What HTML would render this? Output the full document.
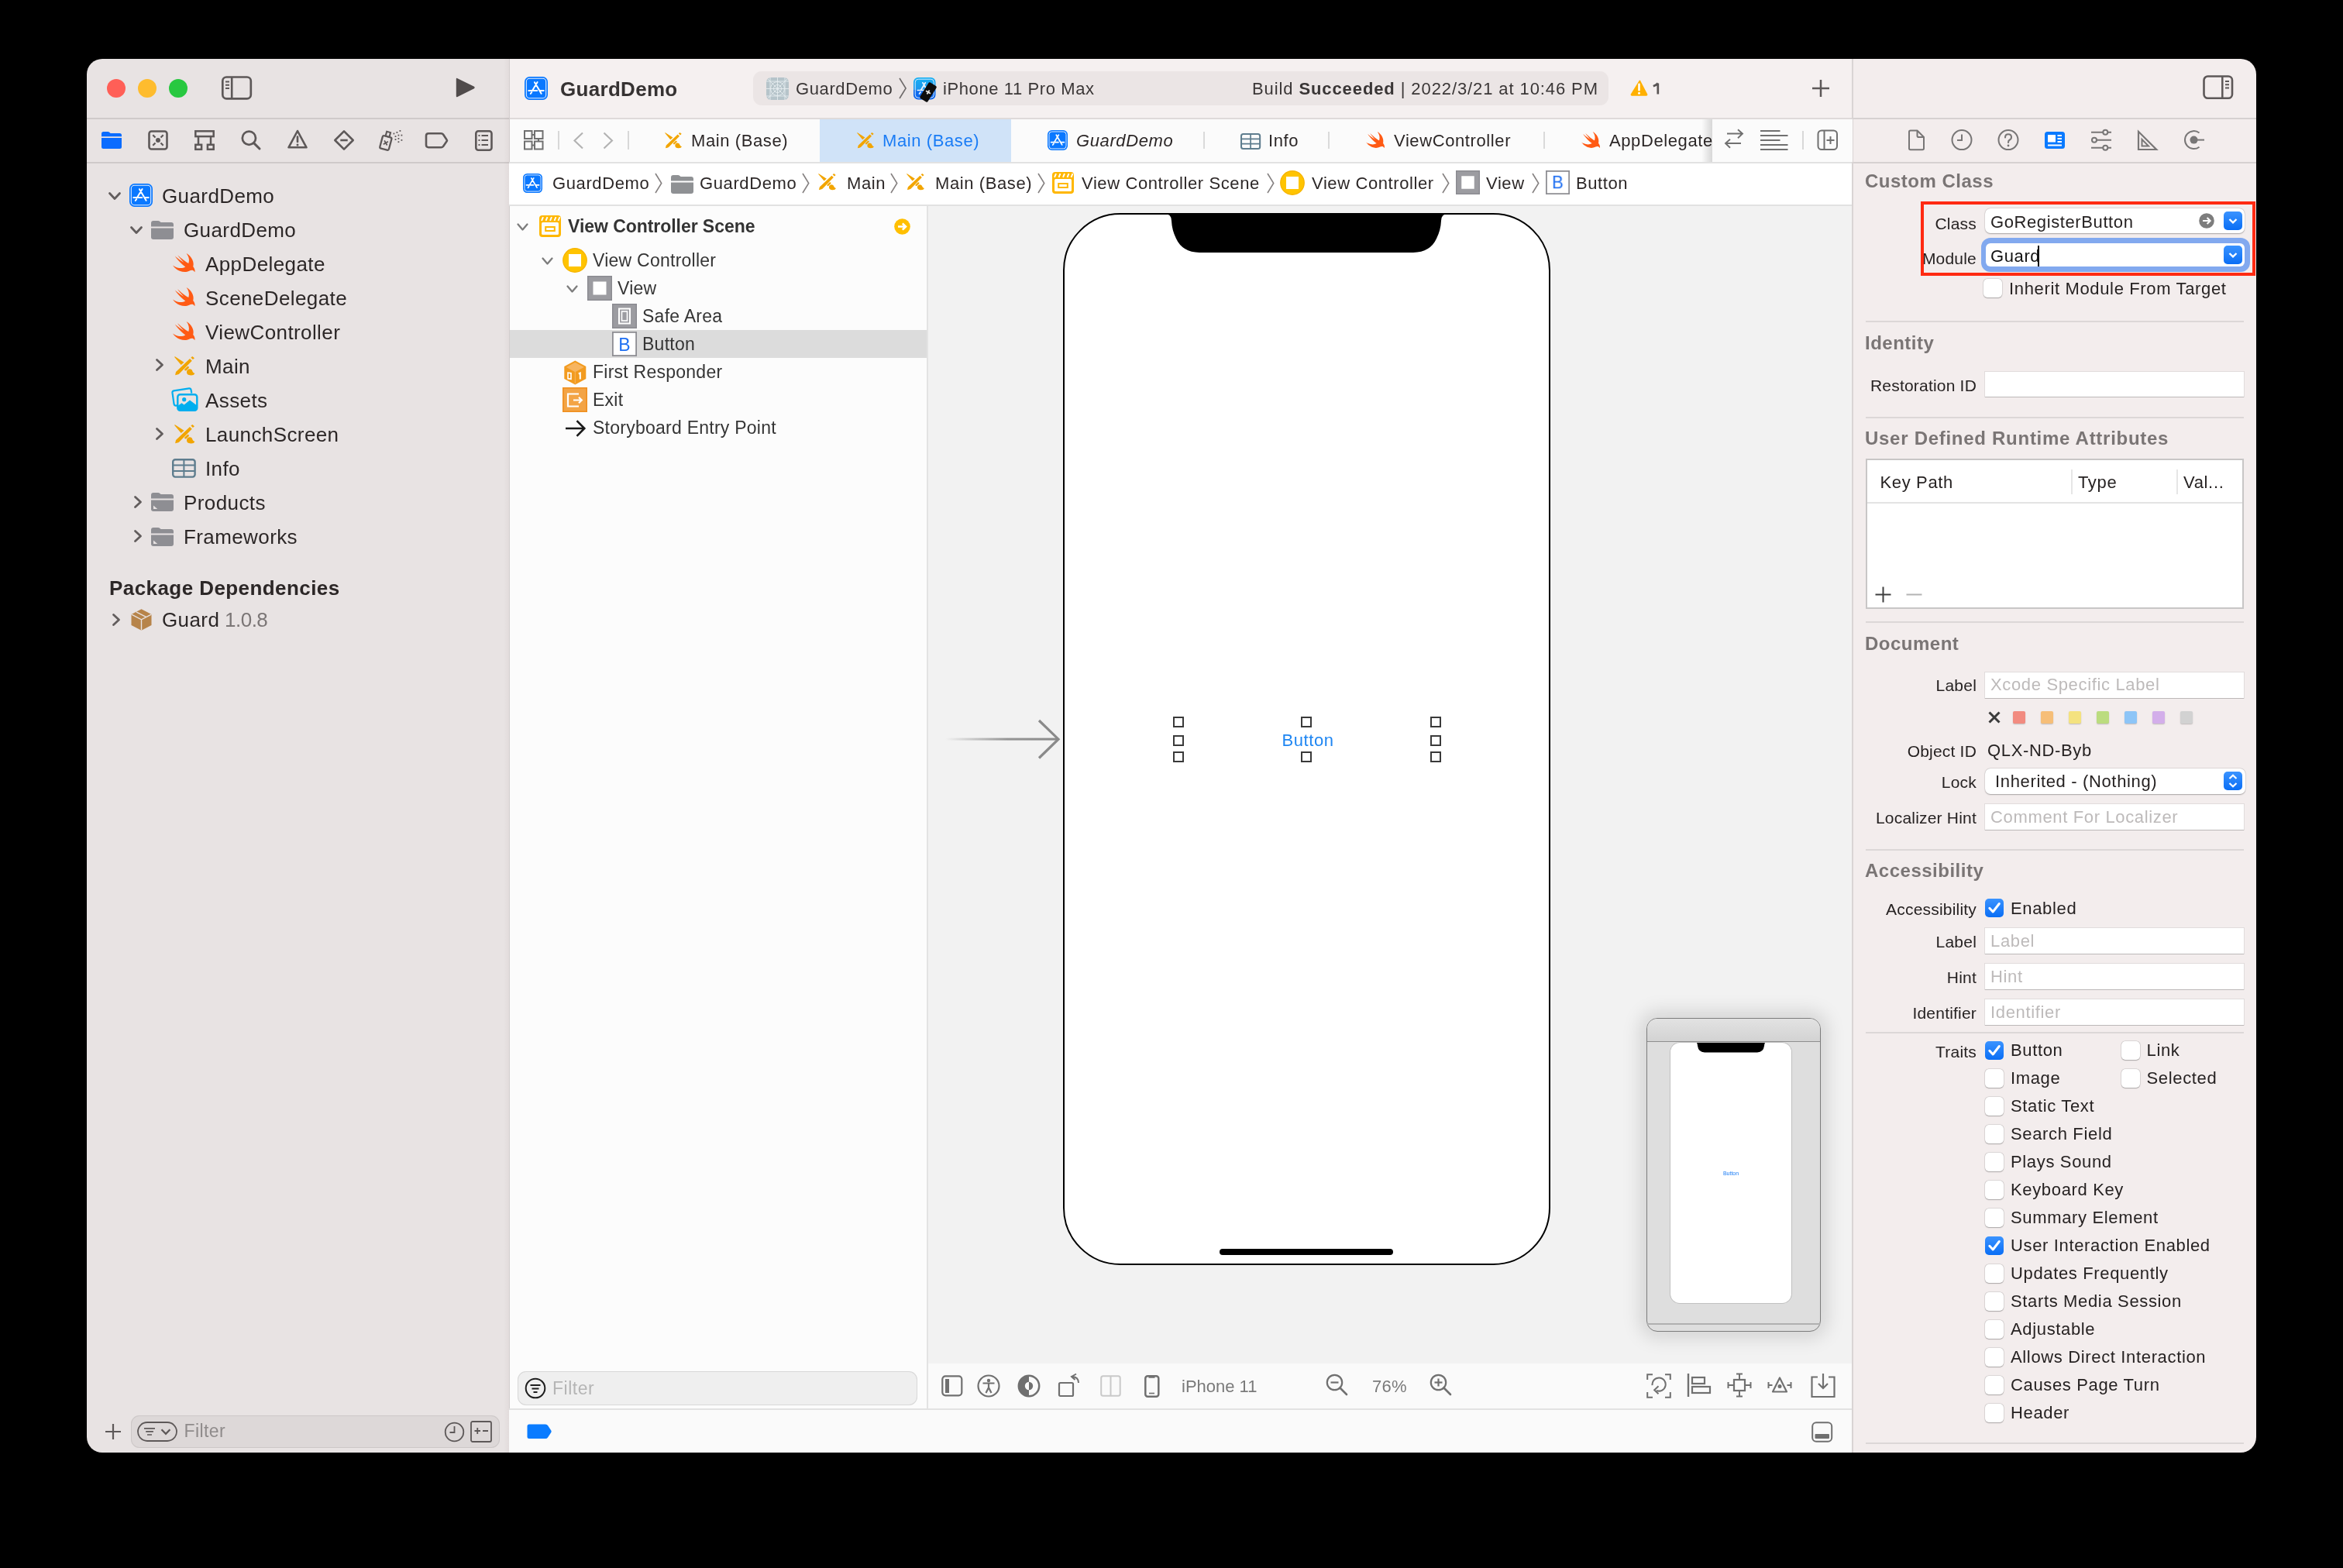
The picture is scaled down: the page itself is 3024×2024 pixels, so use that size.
<!DOCTYPE html><html><head><meta charset="utf-8"><title>Xcode</title><style>
html,body{margin:0;padding:0;}
body{width:3024px;height:2024px;background:#000;position:relative;overflow:hidden;font-family:"Liberation Sans", sans-serif;}
.a{position:absolute;}
.t{position:absolute;white-space:nowrap;line-height:1;}
svg{overflow:visible;}
</style></head><body><div class="a" style="left:0;top:0;width:3024px;height:2024px;clip-path:inset(76px 112px 149px 112px round 20px);will-change:transform;"><div class="a" style="left:112px;top:76px;width:545px;height:1799px;background:#E8E3E3;"></div><div class="a" style="left:657px;top:76px;width:1734px;height:76px;background:#F5F0F0;"></div><div class="a" style="left:2391px;top:76px;width:521px;height:1799px;background:#F3EDED;"></div><div class="a" style="left:112px;top:152px;width:545px;height:2px;background:#CFCACA;"></div><div class="a" style="left:112px;top:209px;width:545px;height:2px;background:#CFCACA;"></div><div class="a" style="left:650px;top:76px;width:7px;height:1799px;background:linear-gradient(90deg,rgba(0,0,0,0),rgba(80,40,40,0.04));"></div><div class="a" style="left:657px;top:76px;width:1px;height:1799px;background:#D3CECE;"></div><div class="a" style="left:658px;top:152px;width:1733px;height:2px;background:#DEDADA;"></div><div class="a" style="left:658px;top:154px;width:1733px;height:55px;background:#FBFBFB;"></div><div class="a" style="left:657px;top:209px;width:1734px;height:2px;background:#E2E2E2;"></div><div class="a" style="left:657px;top:211px;width:1734px;height:53px;background:#FFFFFF;"></div><div class="a" style="left:657px;top:264px;width:1734px;height:2px;background:#E2E2E2;"></div><div class="a" style="left:658px;top:266px;width:538px;height:1553px;background:#FCFCFC;"></div><div class="a" style="left:1196px;top:266px;width:2px;height:1553px;background:#E3E3E3;"></div><div class="a" style="left:1198px;top:266px;width:1193px;height:1494px;background:#F2F2F2;"></div><div class="a" style="left:1198px;top:1760px;width:1193px;height:59px;background:#FAFAFA;"></div><div class="a" style="left:657px;top:1818px;width:1734px;height:2px;background:#E2E2E2;"></div><div class="a" style="left:657px;top:1820px;width:1734px;height:56px;background:#FAFAFA;"></div><div class="a" style="left:2390px;top:76px;width:2px;height:1799px;background:#D9D4D4;"></div><div class="a" style="left:2392px;top:152px;width:520px;height:2px;background:#D6D1D1;"></div><div class="a" style="left:2392px;top:209px;width:520px;height:2px;background:#D6D1D1;"></div><div class="a" style="left:138px;top:102px;width:24px;height:24px;border-radius:50%;background:#FF5F57;"></div><div class="a" style="left:178px;top:102px;width:24px;height:24px;border-radius:50%;background:#FEBC2E;"></div><div class="a" style="left:218px;top:102px;width:24px;height:24px;border-radius:50%;background:#28C840;"></div><svg class="a" style="left:284px;top:96px;" width="42" height="34" viewBox="0 0 42 34"><rect x="3.3" y="3.5" width="36.5" height="27.8" rx="5" fill="none" stroke="#5D5858" stroke-width="2.7"/><line x1="15.2" y1="3.5" x2="15.2" y2="31.3" stroke="#5D5858" stroke-width="2.6"/><path d="M7 9.5h5M7 13.7h5M7 18h5" stroke="#5D5858" stroke-width="2"/></svg><svg class="a" style="left:586px;top:97px;" width="30" height="32" viewBox="0 0 30 32"><path d="M4.5 4.2 Q2.8 3.2 2.8 5.2 V27 Q2.8 29 4.5 28 L26 17.3 Q27.6 16 26 14.8 Z" fill="#504B4B"/></svg><svg class="a" style="left:130px;top:168px;" width="28" height="26" viewBox="0 0 28 26"><path d="M1 4.5 Q1 2 3.5 2 H9 Q10.5 2 11.5 3 L12.5 4 H24.5 Q27 4 27 6.5 V8.2 H1 Z" fill="#0A6CFF"/><path d="M1 10 H27 V21.5 Q27 24 24.5 24 H3.5 Q1 24 1 21.5 Z" fill="#0A6CFF"/></svg><svg class="a" style="left:190px;top:167px;" width="28" height="28" viewBox="0 0 28 28"><rect x="2.5" y="2.5" width="23" height="23" rx="3" fill="none" stroke="#5D5858" stroke-width="2.6"/><circle cx="14" cy="14" r="3" fill="#5D5858"/><path d="M7.3 7.3 L10.5 10.5 M20.7 7.3 L17.5 10.5 M7.3 20.7 L10.5 17.5 M20.7 20.7 L17.5 17.5" stroke="#5D5858" stroke-width="2.2"/></svg><svg class="a" style="left:250px;top:167px;" width="28" height="28" viewBox="0 0 28 28"><rect x="2.3" y="2.3" width="23.4" height="6.8" fill="none" stroke="#5D5858" stroke-width="2.5"/><path d="M6 9 V19.5 M22 9 V19.5" stroke="#5D5858" stroke-width="2.5"/><rect x="2.3" y="19.8" width="7.8" height="6" fill="none" stroke="#5D5858" stroke-width="2.5"/><rect x="17.9" y="19.8" width="7.8" height="6" fill="none" stroke="#5D5858" stroke-width="2.5"/></svg><svg class="a" style="left:309px;top:166px;" width="30" height="30" viewBox="0 0 30 30"><circle cx="12.4" cy="12.2" r="8.6" fill="none" stroke="#5D5858" stroke-width="2.7"/><path d="M18.6 18.6 L26 26" stroke="#5D5858" stroke-width="3" stroke-linecap="round"/></svg><svg class="a" style="left:370px;top:166px;" width="28" height="28" viewBox="0 0 28 28"><path d="M14 3 L25.5 24.3 H2.5 Z" fill="none" stroke="#5D5858" stroke-width="2.6" stroke-linejoin="round"/><path d="M14 10.5 V17" stroke="#5D5858" stroke-width="2.6" stroke-linecap="round"/><circle cx="14" cy="21" r="1.5" fill="#5D5858"/></svg><svg class="a" style="left:430px;top:167px;" width="28" height="28" viewBox="0 0 28 28"><path d="M14 2.3 L25.7 14 L14 25.7 L2.3 14 Z" fill="none" stroke="#5D5858" stroke-width="2.6" stroke-linejoin="round"/><path d="M9.3 14 H18.7" stroke="#5D5858" stroke-width="2.6"/></svg><svg class="a" style="left:488px;top:166px;" width="34" height="30" viewBox="0 0 34 30"><g transform="rotate(15 10 18)"><rect x="4" y="10" width="12" height="17" rx="2" fill="none" stroke="#5D5858" stroke-width="2.3"/><rect x="7.5" y="4" width="5" height="6" fill="none" stroke="#5D5858" stroke-width="2.1"/><path d="M7.5 16 L12.5 21 M12.5 16 L7.5 21" stroke="#5D5858" stroke-width="1.8"/></g><rect x="27.5" y="2" width="1.8" height="1.8" fill="#5D5858"/><rect x="23.5" y="4" width="1.8" height="1.8" fill="#5D5858"/><rect x="19.5" y="5.6" width="1.8" height="1.8" fill="#5D5858"/><rect x="21.6" y="9.2" width="1.8" height="1.8" fill="#5D5858"/><rect x="25.5" y="7.7" width="1.8" height="1.8" fill="#5D5858"/><rect x="29.5" y="7.7" width="1.8" height="1.8" fill="#5D5858"/><rect x="25.5" y="12" width="1.8" height="1.8" fill="#5D5858"/><rect x="21.6" y="13.2" width="1.8" height="1.8" fill="#5D5858"/><rect x="29.5" y="14" width="1.8" height="1.8" fill="#5D5858"/><rect x="25.5" y="16.3" width="1.8" height="1.8" fill="#5D5858"/></svg><svg class="a" style="left:547px;top:170px;" width="33" height="22" viewBox="0 0 33 22"><path d="M6 2.2 H22.5 Q24 2.2 25 3.6 L29.6 10.5 Q30.4 11.4 29.6 12.3 L25 19 Q24 20.2 22.5 20.2 H6 Q3 20.2 3 17.2 V5.2 Q3 2.2 6 2.2 Z" fill="none" stroke="#5D5858" stroke-width="2.6"/></svg><svg class="a" style="left:611px;top:166px;" width="26" height="30" viewBox="0 0 26 30"><rect x="3.3" y="3.3" width="20.2" height="24.4" rx="3" fill="none" stroke="#5D5858" stroke-width="2.6"/><path d="M6.5 9 H8.4 M6.5 15 H8.4 M6.5 21 H8.4" stroke="#5D5858" stroke-width="2"/><path d="M10.5 9 H19 M10.5 15 H19 M10.5 21 H19" stroke="#5D5858" stroke-width="2"/></svg><svg class="a" style="left:140px;top:248px;" width="16" height="10" viewBox="0 0 16 10"><path d="M1.5 1.5 L8.0 8.5 L14.5 1.5" fill="none" stroke="#625D5D" stroke-width="2.8" stroke-linecap="round" stroke-linejoin="round"/></svg><svg class="a" style="left:166.5px;top:237px;" width="30" height="30" viewBox="0 0 30 30"><g transform="scale(1.0000)"><rect x="0" y="0" width="30" height="30" rx="6.5" fill="#0A78FF"/><rect x="2.3" y="2.3" width="25.4" height="25.4" rx="4.2" fill="none" stroke="#E3EEFF" stroke-width="1.1"/><path d="M13 7.2 L21.6 21.8 M16.6 7.1 L10.5 17.2 M7.8 21.9 L9.2 20.1 M5.3 17.9 H16.2 M19.6 17.9 H24.7" stroke="#FFF" stroke-width="2" stroke-linecap="round" fill="none"/></g></svg><svg class="a" style="left:168px;top:292px;" width="16" height="10" viewBox="0 0 16 10"><path d="M1.5 1.5 L8.0 8.5 L14.5 1.5" fill="none" stroke="#625D5D" stroke-width="2.8" stroke-linecap="round" stroke-linejoin="round"/></svg><svg class="a" style="left:195px;top:284.5px;" width="29" height="24" viewBox="0 0 29 24"><path d="M0 3 Q0 0 3 0 H9 Q10.4 0 11.4 1 L12.6 2 H26 Q29 2 29 5 V7.6 H0 Z" fill="#8E8E93"/><path d="M0 9.4 H29 V21 Q29 24 26 24 H3 Q0 24 0 21 Z" fill="#8E8E93"/></svg><svg class="a" style="left:223.4px;top:326.9px;" width="28.6" height="24.2" viewBox="0 0 28.6 24.2"><g transform="scale(1.5786 1.4926) translate(-2.411 -3.409)"><path d="M13.543 3.41c4.114 2.47 6.545 7.162 5.549 11.131-.024.093-.05.181-.076.272l.002.001c2.062 2.538 1.5 5.258 1.236 4.745-1.072-2.086-3.066-1.568-4.088-1.043a6.803 6.803 0 0 1-.281.158l-.02.012-.002.002c-2.115 1.123-4.957 1.205-7.812-.022a12.568 12.568 0 0 1-5.64-4.838c.649.48 1.35.902 2.097 1.252 3.019 1.414 6.051 1.311 8.197-.002C9.651 12.73 7.101 9.67 5.146 7.191a10.628 10.628 0 0 1-1.005-1.384c2.34 2.142 6.038 4.83 7.365 5.576C8.69 8.408 6.208 4.743 6.324 4.86c4.436 4.47 8.528 6.996 8.528 6.996.154.085.27.154.36.213.085-.215.16-.437.224-.668.708-2.588-.09-5.548-1.893-7.992z" fill="#FF5A14"/></g></svg><svg class="a" style="left:223.4px;top:370.9px;" width="28.6" height="24.2" viewBox="0 0 28.6 24.2"><g transform="scale(1.5786 1.4926) translate(-2.411 -3.409)"><path d="M13.543 3.41c4.114 2.47 6.545 7.162 5.549 11.131-.024.093-.05.181-.076.272l.002.001c2.062 2.538 1.5 5.258 1.236 4.745-1.072-2.086-3.066-1.568-4.088-1.043a6.803 6.803 0 0 1-.281.158l-.02.012-.002.002c-2.115 1.123-4.957 1.205-7.812-.022a12.568 12.568 0 0 1-5.64-4.838c.649.48 1.35.902 2.097 1.252 3.019 1.414 6.051 1.311 8.197-.002C9.651 12.73 7.101 9.67 5.146 7.191a10.628 10.628 0 0 1-1.005-1.384c2.34 2.142 6.038 4.83 7.365 5.576C8.69 8.408 6.208 4.743 6.324 4.86c4.436 4.47 8.528 6.996 8.528 6.996.154.085.27.154.36.213.085-.215.16-.437.224-.668.708-2.588-.09-5.548-1.893-7.992z" fill="#FF5A14"/></g></svg><svg class="a" style="left:223.4px;top:414.9px;" width="28.6" height="24.2" viewBox="0 0 28.6 24.2"><g transform="scale(1.5786 1.4926) translate(-2.411 -3.409)"><path d="M13.543 3.41c4.114 2.47 6.545 7.162 5.549 11.131-.024.093-.05.181-.076.272l.002.001c2.062 2.538 1.5 5.258 1.236 4.745-1.072-2.086-3.066-1.568-4.088-1.043a6.803 6.803 0 0 1-.281.158l-.02.012-.002.002c-2.115 1.123-4.957 1.205-7.812-.022a12.568 12.568 0 0 1-5.64-4.838c.649.48 1.35.902 2.097 1.252 3.019 1.414 6.051 1.311 8.197-.002C9.651 12.73 7.101 9.67 5.146 7.191a10.628 10.628 0 0 1-1.005-1.384c2.34 2.142 6.038 4.83 7.365 5.576C8.69 8.408 6.208 4.743 6.324 4.86c4.436 4.47 8.528 6.996 8.528 6.996.154.085.27.154.36.213.085-.215.16-.437.224-.668.708-2.588-.09-5.548-1.893-7.992z" fill="#FF5A14"/></g></svg><svg class="a" style="left:201px;top:463px;" width="10" height="16" viewBox="0 0 10 16"><path d="M1.5 1.5 L8.5 8.0 L1.5 14.5" fill="none" stroke="#625D5D" stroke-width="2.8" stroke-linecap="round" stroke-linejoin="round"/></svg><svg class="a" style="left:224.5px;top:459.7px;" width="26.4" height="24.5" viewBox="0 0 26.4 24.5"><path d="M0.9 0.2 Q0 0 0.25 0.9 L8.7 11 L12.5 7.8 Z" fill="#F2A500"/><path d="M20 3.1 L22.8 5.8 L6.3 22.6 Q5.8 23.1 5 23.3 L1.1 24.3 L1.9 20.6 Q2.1 19.9 2.6 19.4 Z" fill="#F2A500"/><path d="M21.4 1.4 L23.3 0.1 L26 2.2 L23.9 4.1 Z" fill="#F2A500"/><path d="M14.4 17.2 L17.6 14.2" stroke="#F2A500" stroke-width="2.6" stroke-linecap="round"/><path d="M16 20.8 Q15.8 16.8 19.6 16.3 Q22.7 16.2 23.5 19.4 Q24.1 21.2 26.4 21.9 Q25.4 24.4 21.5 24.4 Q16.2 24.5 16 20.8 Z" fill="#F2A500"/></svg><svg class="a" style="left:221px;top:501px;" width="35" height="30" viewBox="0 0 35 30"><g><path d="M1.5 6.2 Q1 3.8 3.4 3.3 L23 0.4 Q25.2 0.1 25.6 2.4 L26.3 6.5" fill="none" stroke="#00AEEF" stroke-width="2.2"/><path d="M1.5 6.2 L3.6 20.8 Q4 22.8 6 22.6 L8 22.3" fill="none" stroke="#00AEEF" stroke-width="2.2"/><rect x="8.3" y="8.2" width="25" height="20.6" rx="3.2" fill="none" stroke="#00AEEF" stroke-width="2.4"/><circle cx="16.7" cy="14.7" r="2.6" fill="#00AEEF"/><path d="M8.3 23 L13.5 19.3 L16.6 21.6 L24 15.4 L33.3 22.5 V26 Q33.3 28.8 30.5 28.8 H11 Q8.3 28.8 8.3 26 Z" fill="#00AEEF"/></g></svg><svg class="a" style="left:201px;top:552px;" width="10" height="16" viewBox="0 0 10 16"><path d="M1.5 1.5 L8.5 8.0 L1.5 14.5" fill="none" stroke="#625D5D" stroke-width="2.8" stroke-linecap="round" stroke-linejoin="round"/></svg><svg class="a" style="left:224.5px;top:547.7px;" width="26.4" height="24.5" viewBox="0 0 26.4 24.5"><path d="M0.9 0.2 Q0 0 0.25 0.9 L8.7 11 L12.5 7.8 Z" fill="#F2A500"/><path d="M20 3.1 L22.8 5.8 L6.3 22.6 Q5.8 23.1 5 23.3 L1.1 24.3 L1.9 20.6 Q2.1 19.9 2.6 19.4 Z" fill="#F2A500"/><path d="M21.4 1.4 L23.3 0.1 L26 2.2 L23.9 4.1 Z" fill="#F2A500"/><path d="M14.4 17.2 L17.6 14.2" stroke="#F2A500" stroke-width="2.6" stroke-linecap="round"/><path d="M16 20.8 Q15.8 16.8 19.6 16.3 Q22.7 16.2 23.5 19.4 Q24.1 21.2 26.4 21.9 Q25.4 24.4 21.5 24.4 Q16.2 24.5 16 20.8 Z" fill="#F2A500"/></svg><svg class="a" style="left:222px;top:591.5px;" width="31.0" height="25.0" viewBox="0 0 31.0 25.0"><g transform="scale(1.0)"><rect x="1.2" y="1.2" width="28.4" height="22.4" rx="3" fill="none" stroke="#5E7D8E" stroke-width="2.4"/><path d="M15.4 1.2 V23.6 M1.2 8.6 H29.6 M1.2 16 H29.6" stroke="#5E7D8E" stroke-width="2"/></g></svg><svg class="a" style="left:173px;top:639.5px;" width="10" height="16" viewBox="0 0 10 16"><path d="M1.5 1.5 L8.5 8.0 L1.5 14.5" fill="none" stroke="#625D5D" stroke-width="2.8" stroke-linecap="round" stroke-linejoin="round"/></svg><svg class="a" style="left:195px;top:636px;" width="29" height="24" viewBox="0 0 29 24"><path d="M0 3 Q0 0 3 0 H9 Q10.4 0 11.4 1 L12.6 2 H26 Q29 2 29 5 V7.6 H0 Z" fill="#8E8E93"/><path d="M0 9.4 H29 V21 Q29 24 26 24 H3 Q0 24 0 21 Z" fill="#8E8E93"/><path d="M3 21 V16.5 L8.2 21 Z" fill="#E8E3E3"/></svg><svg class="a" style="left:173px;top:683.5px;" width="10" height="16" viewBox="0 0 10 16"><path d="M1.5 1.5 L8.5 8.0 L1.5 14.5" fill="none" stroke="#625D5D" stroke-width="2.8" stroke-linecap="round" stroke-linejoin="round"/></svg><svg class="a" style="left:195px;top:680.5px;" width="29" height="24" viewBox="0 0 29 24"><path d="M0 3 Q0 0 3 0 H9 Q10.4 0 11.4 1 L12.6 2 H26 Q29 2 29 5 V7.6 H0 Z" fill="#8E8E93"/><path d="M0 9.4 H29 V21 Q29 24 26 24 H3 Q0 24 0 21 Z" fill="#8E8E93"/><path d="M3 21 V16.5 L8.2 21 Z" fill="#E8E3E3"/></svg><svg class="a" style="left:145px;top:791.5px;" width="10" height="16" viewBox="0 0 10 16"><path d="M1.5 1.5 L8.5 8.0 L1.5 14.5" fill="none" stroke="#625D5D" stroke-width="2.8" stroke-linecap="round" stroke-linejoin="round"/></svg><svg class="a" style="left:168.5px;top:786px;" width="27" height="28" viewBox="0 0 27 28"><path d="M13.5 0.3 L26.5 7 V21 L13.5 27.8 L0.5 21 V7 Z" fill="#B7844A"/><path d="M0.8 7.2 L13.5 13.8 L26.2 7.2 M13.5 13.8 V27.6" fill="none" stroke="#E8E3E3" stroke-width="1.4"/><path d="M6.8 3.8 L19.5 10.4" stroke="#E8E3E3" stroke-width="1.4"/></svg><div class="t" style="top:239.99px;font-size:26px;color:#2C2727;letter-spacing:0.4px;left:209px;">GuardDemo</div><div class="t" style="top:283.99px;font-size:26px;color:#2C2727;letter-spacing:0.4px;left:237px;">GuardDemo</div><div class="t" style="top:327.99px;font-size:26px;color:#2C2727;letter-spacing:0.4px;left:265px;">AppDelegate</div><div class="t" style="top:371.99px;font-size:26px;color:#2C2727;letter-spacing:0.4px;left:265px;">SceneDelegate</div><div class="t" style="top:415.99px;font-size:26px;color:#2C2727;letter-spacing:0.4px;left:265px;">ViewController</div><div class="t" style="top:459.99px;font-size:26px;color:#2C2727;letter-spacing:0.4px;left:265px;">Main</div><div class="t" style="top:503.99px;font-size:26px;color:#2C2727;letter-spacing:0.4px;left:265px;">Assets</div><div class="t" style="top:547.99px;font-size:26px;color:#2C2727;letter-spacing:0.4px;left:265px;">LaunchScreen</div><div class="t" style="top:591.99px;font-size:26px;color:#2C2727;letter-spacing:0.4px;left:265px;">Info</div><div class="t" style="top:635.99px;font-size:26px;color:#2C2727;letter-spacing:0.4px;left:237px;">Products</div><div class="t" style="top:679.99px;font-size:26px;color:#2C2727;letter-spacing:0.4px;left:237px;">Frameworks</div><div class="t" style="top:745.99px;font-size:26px;color:#2C2727;font-weight:700;letter-spacing:0.43px;left:141px;">Package Dependencies</div><div class="t" style="top:786.99px;font-size:26px;color:#2C2727;letter-spacing:0.4px;left:209px;">Guard</div><div class="t" style="top:786.99px;font-size:26px;color:#7B7676;letter-spacing:-0.5px;left:290px;">1.0.8</div><div class="a" style="left:169px;top:1827px;width:476px;height:42px;border-radius:11px;background:#DDD8D8;box-shadow:inset 0 0 0 1px #CDC8C8;"></div><div class="t" style="top:1836.03px;font-size:23px;color:#8F8B8B;letter-spacing:0.4px;left:237.5px;">Filter</div><svg class="a" style="left:134px;top:1836px;" width="24" height="24" viewBox="0 0 24 24"><path d="M12 2 V22 M2 12 H22" stroke="#5D5858" stroke-width="2.2"/></svg><svg class="a" style="left:177px;top:1835px;" width="52" height="26" viewBox="0 0 52 26"><rect x="1" y="1" width="50" height="24" rx="12" fill="none" stroke="#5D5858" stroke-width="1.8"/><path d="M9 8.9 H23 M11.2 12.9 H20.9 M13 17 H19" stroke="#5D5858" stroke-width="1.7"/><path d="M31.5 10.3 L37 15.8 L42.4 10.3" fill="none" stroke="#5D5858" stroke-width="2.3"/></svg><svg class="a" style="left:573px;top:1835px;" width="28" height="27" viewBox="0 0 28 27"><circle cx="13.5" cy="13.5" r="11.8" fill="none" stroke="#5D5858" stroke-width="1.8"/><path d="M13.5 6 V14 H7.5" fill="none" stroke="#5D5858" stroke-width="1.8"/></svg><svg class="a" style="left:607px;top:1834px;" width="28" height="28" viewBox="0 0 28 28"><rect x="1" y="1" width="26" height="26" rx="2" fill="none" stroke="#5D5858" stroke-width="1.8"/><path d="M5.5 13 H13 M9.25 9 V17 M16 13 H23" stroke="#5D5858" stroke-width="1.8"/></svg><div class="t" style="top:101.99px;font-size:26px;color:#363232;font-weight:700;letter-spacing:0.3px;left:723px;">GuardDemo</div><svg class="a" style="left:677px;top:99px;" width="30" height="30" viewBox="0 0 30 30"><g transform="scale(1.0000)"><rect x="0" y="0" width="30" height="30" rx="6.5" fill="#0A78FF"/><rect x="2.3" y="2.3" width="25.4" height="25.4" rx="4.2" fill="none" stroke="#E3EEFF" stroke-width="1.1"/><path d="M13 7.2 L21.6 21.8 M16.6 7.1 L10.5 17.2 M7.8 21.9 L9.2 20.1 M5.3 17.9 H16.2 M19.6 17.9 H24.7" stroke="#FFF" stroke-width="2" stroke-linecap="round" fill="none"/></g></svg><div class="a" style="left:972px;top:92px;width:1104px;height:44px;border-radius:11px;background:#EBE5E5;"></div><svg class="a" style="left:988.5px;top:99.5px;" width="29" height="29" viewBox="0 0 29 29"><rect x="0" y="0" width="29" height="29" rx="6" fill="#B6C4CA"/><circle cx="14.5" cy="14.5" r="9" fill="none" stroke="#E4ECEE" stroke-width="1"/><circle cx="14.5" cy="14.5" r="5" fill="none" stroke="#E4ECEE" stroke-width="1"/><path d="M2 2 L27 27 M27 2 L2 27 M14.5 0 V29 M0 14.5 H29 M5 0 V29 M24 0 V29 M0 5 H29 M0 24 H29" stroke="#E4ECEE" stroke-width="0.9"/></svg><svg class="a" style="left:1159.5px;top:100px;" width="10.08" height="28" viewBox="0 0 10.08 28"><path d="M1 1 L9.08 14.0 L1 27" fill="none" stroke="#6E6A6A" stroke-width="1.6"/></svg><svg class="a" style="left:1179px;top:100px;" width="28.5" height="28.5" viewBox="0 0 28.5 28.5"><defs><linearGradient id="dg" x1="0" x2="0" y1="0" y2="1"><stop offset="0" stop-color="#16B0F2"/><stop offset="0.55" stop-color="#1C96EE"/><stop offset="0.56" stop-color="#0F6DEB"/><stop offset="1" stop-color="#0A62EE"/></linearGradient></defs><rect x="0" y="0" width="28.5" height="28.5" rx="6" fill="url(#dg)"/><rect x="2.2" y="2.2" width="24.1" height="24.1" rx="4" fill="none" stroke="#D8ECFF" stroke-width="1"/><path d="M11.9 6.8 L20 20.5 M15.3 6.8 L9.8 16 M7.5 21 L9 19 M5.3 16.5 H15 M18.5 16.5 H23" stroke="#E8F4FF" stroke-width="1.7" stroke-linecap="round" fill="none"/></svg><svg class="a" style="left:1186px;top:105.5px;" width="24" height="26" viewBox="0 0 24 26"><g transform="rotate(32 12 13)"><rect x="6" y="1" width="12" height="24" rx="1.8" fill="#0D0D0D"/><path d="M8.5 13 L15.5 13 M12 10 L12 16" stroke="#E6E6E6" stroke-width="1.8"/></g></svg><svg class="a" style="left:2104px;top:103px;" width="23" height="22" viewBox="0 0 23 22"><path d="M11.5 1.2 Q12.3 0 13.2 1.3 L22.2 18.6 Q23 20.6 21 20.8 H2 Q0 20.6 0.8 18.6 Z" fill="#FFB000"/><path d="M11.5 5.8 V13.3" stroke="#fff" stroke-width="2.6" stroke-linecap="round"/><circle cx="11.5" cy="17.3" r="1.5" fill="#fff"/></svg><svg class="a" style="left:2338px;top:102px;" width="24" height="24" viewBox="0 0 24 24"><path d="M12 1 V23 M1 12 H23" stroke="#5D5858" stroke-width="2.5"/></svg><svg class="a" style="left:2843px;top:97px;" width="40" height="32" viewBox="0 0 40 32"><rect x="1.5" y="1.5" width="36.5" height="28.3" rx="5" fill="none" stroke="#5D5858" stroke-width="2.6"/><line x1="25.3" y1="1.5" x2="25.3" y2="29.8" stroke="#5D5858" stroke-width="2.5"/><path d="M29 8 H34 M29 12.3 H34 M29 16.6 H34" stroke="#5D5858" stroke-width="2"/></svg><div class="t" style="top:104.37px;font-size:22px;color:#3A3636;letter-spacing:0.6px;left:1027px;">GuardDemo</div><div class="t" style="top:104.37px;font-size:22px;color:#3A3636;letter-spacing:0.6px;left:1217px;">iPhone 11 Pro Max</div><div class="t" style="top:104.37px;font-size:22px;color:#3A3636;letter-spacing:0.9px;left:1616px;">Build <b>Succeeded</b> | 2022/3/21 at 10:46 PM</div><svg class="a" style="left:2132px;top:106px;" width="12" height="17" viewBox="0 0 12 17"><path d="M7.8 1.5 V15.5 M1.8 5.3 Q5.5 4 7.8 1.5" fill="none" stroke="#595555" stroke-width="2.7" stroke-linejoin="round"/></svg><div class="a" style="left:1058px;top:154px;width:247px;height:55px;background:#D0E3F8;"></div><svg class="a" style="left:675px;top:167px;" width="28" height="28" viewBox="0 0 28 28"><g fill="none" stroke="#707070" stroke-width="2"><rect x="2" y="2" width="9.5" height="10"/><rect x="15" y="2" width="10.5" height="10"/><rect x="2" y="15.5" width="9.5" height="10"/><rect x="15" y="15.5" width="10.5" height="10"/><path d="M11.5 7 H15 M20 12 V15.5 M11.5 20.5 H15"/></g></svg><div class="a" style="left:720px;top:169px;width:2px;height:24px;background:#D8D8D8;"></div><svg class="a" style="left:739px;top:170px;" width="15" height="23" viewBox="0 0 15 23"><path d="M13 1.5 L2.5 11.5 L13 21.5" fill="none" stroke="#B2B2B2" stroke-width="2.1"/></svg><svg class="a" style="left:778px;top:170px;" width="15" height="23" viewBox="0 0 15 23"><path d="M1.5 1.5 L12 11.5 L1.5 21.5" fill="none" stroke="#B2B2B2" stroke-width="2.1"/></svg><div class="a" style="left:810px;top:169px;width:2px;height:24px;background:#D8D8D8;"></div><svg class="a" style="left:858px;top:170.5px;" width="22" height="20.416666666666668" viewBox="0 0 26.4 24.5"><path d="M0.9 0.2 Q0 0 0.25 0.9 L8.7 11 L12.5 7.8 Z" fill="#F2A500"/><path d="M20 3.1 L22.8 5.8 L6.3 22.6 Q5.8 23.1 5 23.3 L1.1 24.3 L1.9 20.6 Q2.1 19.9 2.6 19.4 Z" fill="#F2A500"/><path d="M21.4 1.4 L23.3 0.1 L26 2.2 L23.9 4.1 Z" fill="#F2A500"/><path d="M14.4 17.2 L17.6 14.2" stroke="#F2A500" stroke-width="2.6" stroke-linecap="round"/><path d="M16 20.8 Q15.8 16.8 19.6 16.3 Q22.7 16.2 23.5 19.4 Q24.1 21.2 26.4 21.9 Q25.4 24.4 21.5 24.4 Q16.2 24.5 16 20.8 Z" fill="#F2A500"/></svg><svg class="a" style="left:1106px;top:170.5px;" width="22" height="20.416666666666668" viewBox="0 0 26.4 24.5"><path d="M0.9 0.2 Q0 0 0.25 0.9 L8.7 11 L12.5 7.8 Z" fill="#F2A500"/><path d="M20 3.1 L22.8 5.8 L6.3 22.6 Q5.8 23.1 5 23.3 L1.1 24.3 L1.9 20.6 Q2.1 19.9 2.6 19.4 Z" fill="#F2A500"/><path d="M21.4 1.4 L23.3 0.1 L26 2.2 L23.9 4.1 Z" fill="#F2A500"/><path d="M14.4 17.2 L17.6 14.2" stroke="#F2A500" stroke-width="2.6" stroke-linecap="round"/><path d="M16 20.8 Q15.8 16.8 19.6 16.3 Q22.7 16.2 23.5 19.4 Q24.1 21.2 26.4 21.9 Q25.4 24.4 21.5 24.4 Q16.2 24.5 16 20.8 Z" fill="#F2A500"/></svg><svg class="a" style="left:1352px;top:168px;" width="26" height="26" viewBox="0 0 26 26"><g transform="scale(0.8667)"><rect x="0" y="0" width="30" height="30" rx="6.5" fill="#0A78FF"/><rect x="2.3" y="2.3" width="25.4" height="25.4" rx="4.2" fill="none" stroke="#E3EEFF" stroke-width="1.1"/><path d="M13 7.2 L21.6 21.8 M16.6 7.1 L10.5 17.2 M7.8 21.9 L9.2 20.1 M5.3 17.9 H16.2 M19.6 17.9 H24.7" stroke="#FFF" stroke-width="2" stroke-linecap="round" fill="none"/></g></svg><div class="a" style="left:1553px;top:170px;width:2px;height:22px;background:#DADADA;"></div><div class="a" style="left:1714px;top:170px;width:2px;height:22px;background:#DADADA;"></div><div class="a" style="left:1992px;top:170px;width:2px;height:22px;background:#DADADA;"></div><svg class="a" style="left:1601px;top:172px;" width="26.349999999999998" height="21.25" viewBox="0 0 26.349999999999998 21.25"><g transform="scale(0.85)"><rect x="1.2" y="1.2" width="28.4" height="22.4" rx="3" fill="none" stroke="#5E7D8E" stroke-width="2.4"/><path d="M15.4 1.2 V23.6 M1.2 8.6 H29.6 M1.2 16 H29.6" stroke="#5E7D8E" stroke-width="2"/></g></svg><svg class="a" style="left:1763px;top:169.5px;" width="24" height="21" viewBox="0 0 24 21"><g transform="scale(1.3247 1.2953) translate(-2.411 -3.409)"><path d="M13.543 3.41c4.114 2.47 6.545 7.162 5.549 11.131-.024.093-.05.181-.076.272l.002.001c2.062 2.538 1.5 5.258 1.236 4.745-1.072-2.086-3.066-1.568-4.088-1.043a6.803 6.803 0 0 1-.281.158l-.02.012-.002.002c-2.115 1.123-4.957 1.205-7.812-.022a12.568 12.568 0 0 1-5.64-4.838c.649.48 1.35.902 2.097 1.252 3.019 1.414 6.051 1.311 8.197-.002C9.651 12.73 7.101 9.67 5.146 7.191a10.628 10.628 0 0 1-1.005-1.384c2.34 2.142 6.038 4.83 7.365 5.576C8.69 8.408 6.208 4.743 6.324 4.86c4.436 4.47 8.528 6.996 8.528 6.996.154.085.27.154.36.213.085-.215.16-.437.224-.668.708-2.588-.09-5.548-1.893-7.992z" fill="#FF5A14"/></g></svg><svg class="a" style="left:2041px;top:169.5px;" width="24" height="21" viewBox="0 0 24 21"><g transform="scale(1.3247 1.2953) translate(-2.411 -3.409)"><path d="M13.543 3.41c4.114 2.47 6.545 7.162 5.549 11.131-.024.093-.05.181-.076.272l.002.001c2.062 2.538 1.5 5.258 1.236 4.745-1.072-2.086-3.066-1.568-4.088-1.043a6.803 6.803 0 0 1-.281.158l-.02.012-.002.002c-2.115 1.123-4.957 1.205-7.812-.022a12.568 12.568 0 0 1-5.64-4.838c.649.48 1.35.902 2.097 1.252 3.019 1.414 6.051 1.311 8.197-.002C9.651 12.73 7.101 9.67 5.146 7.191a10.628 10.628 0 0 1-1.005-1.384c2.34 2.142 6.038 4.83 7.365 5.576C8.69 8.408 6.208 4.743 6.324 4.86c4.436 4.47 8.528 6.996 8.528 6.996.154.085.27.154.36.213.085-.215.16-.437.224-.668.708-2.588-.09-5.548-1.893-7.992z" fill="#FF5A14"/></g></svg><div class="t" style="top:171.37px;font-size:22px;color:#2C2727;letter-spacing:0.6px;left:892px;">Main (Base)</div><div class="t" style="top:171.37px;font-size:22px;color:#1A7CF5;letter-spacing:0.6px;left:1139px;">Main (Base)</div><div class="t" style="top:171.37px;font-size:22px;color:#2C2727;letter-spacing:0.6px;font-style:italic;left:1389px;">GuardDemo</div><div class="t" style="top:171.37px;font-size:22px;color:#2C2727;letter-spacing:0.6px;left:1637px;">Info</div><div class="t" style="top:171.37px;font-size:22px;color:#2C2727;letter-spacing:0.6px;left:1799px;">ViewController</div><div class="t" style="top:171.37px;font-size:22px;color:#2C2727;letter-spacing:0.6px;left:2077px;">AppDelegate</div><div class="a" style="left:2196px;top:154px;width:14px;height:55px;background:linear-gradient(90deg,rgba(0,0,0,0),rgba(0,0,0,0.14));"></div><div class="a" style="left:2210px;top:154px;width:181px;height:55px;background:#FBFBFB;"></div><svg class="a" style="left:2224px;top:166px;" width="28" height="30" viewBox="0 0 28 30"><path d="M5 6.5 H25 M19 1.2 L25 6.5 L19 12.3 M23 19 H3 M9 13.8 L3 19 L9 24.8" fill="none" stroke="#707070" stroke-width="1.9"/></svg><svg class="a" style="left:2271px;top:167px;" width="38" height="28" viewBox="0 0 38 28"><path d="M1 2 H26.5 M1 8 H36.5 M1 14 H26.5 M1 20 H36.5 M1 26 H36.5" stroke="#707070" stroke-width="2"/></svg><div class="a" style="left:2326px;top:169px;width:2px;height:24px;background:#D8D8D8;"></div><svg class="a" style="left:2345px;top:167px;" width="28" height="28" viewBox="0 0 28 28"><rect x="1.5" y="1.5" width="24.5" height="24.5" rx="4.5" fill="none" stroke="#707070" stroke-width="2"/><path d="M9.5 1.5 V26 M17.5 9 V19 M12.5 14 H22.5" stroke="#707070" stroke-width="2"/></svg><svg class="a" style="left:675px;top:224px;" width="25" height="25" viewBox="0 0 25 25"><g transform="scale(0.8333)"><rect x="0" y="0" width="30" height="30" rx="6.5" fill="#0A78FF"/><rect x="2.3" y="2.3" width="25.4" height="25.4" rx="4.2" fill="none" stroke="#E3EEFF" stroke-width="1.1"/><path d="M13 7.2 L21.6 21.8 M16.6 7.1 L10.5 17.2 M7.8 21.9 L9.2 20.1 M5.3 17.9 H16.2 M19.6 17.9 H24.7" stroke="#FFF" stroke-width="2" stroke-linecap="round" fill="none"/></g></svg><svg class="a" style="left:844.5px;top:222.5px;" width="9.719999999999999" height="27" viewBox="0 0 9.719999999999999 27"><path d="M1 1 L8.719999999999999 13.5 L1 26" fill="none" stroke="#858181" stroke-width="1.6"/></svg><svg class="a" style="left:1034.5px;top:222.5px;" width="9.719999999999999" height="27" viewBox="0 0 9.719999999999999 27"><path d="M1 1 L8.719999999999999 13.5 L1 26" fill="none" stroke="#858181" stroke-width="1.6"/></svg><svg class="a" style="left:1148.5px;top:222.5px;" width="9.719999999999999" height="27" viewBox="0 0 9.719999999999999 27"><path d="M1 1 L8.719999999999999 13.5 L1 26" fill="none" stroke="#858181" stroke-width="1.6"/></svg><svg class="a" style="left:1338.5px;top:222.5px;" width="9.719999999999999" height="27" viewBox="0 0 9.719999999999999 27"><path d="M1 1 L8.719999999999999 13.5 L1 26" fill="none" stroke="#858181" stroke-width="1.6"/></svg><svg class="a" style="left:1634.5px;top:222.5px;" width="9.719999999999999" height="27" viewBox="0 0 9.719999999999999 27"><path d="M1 1 L8.719999999999999 13.5 L1 26" fill="none" stroke="#858181" stroke-width="1.6"/></svg><svg class="a" style="left:1860.5px;top:222.5px;" width="9.719999999999999" height="27" viewBox="0 0 9.719999999999999 27"><path d="M1 1 L8.719999999999999 13.5 L1 26" fill="none" stroke="#858181" stroke-width="1.6"/></svg><svg class="a" style="left:1976.5px;top:222.5px;" width="9.719999999999999" height="27" viewBox="0 0 9.719999999999999 27"><path d="M1 1 L8.719999999999999 13.5 L1 26" fill="none" stroke="#858181" stroke-width="1.6"/></svg><svg class="a" style="left:865.5px;top:226px;" width="24.5" height="20" viewBox="0 0 24.5 20"><path d="M0 3 Q0 0 3 0 H9 Q10.4 0 11.4 1 L12.6 2 H26 Q29 2 29 5 V7.6 H0 Z" fill="#8F9194"/><path d="M0 9.4 H29 V21 Q29 24 26 24 H3 Q0 24 0 21 Z" fill="#8F9194"/></svg><svg class="a" style="left:1056px;top:224px;" width="23" height="21.344696969696972" viewBox="0 0 26.4 24.5"><path d="M0.9 0.2 Q0 0 0.25 0.9 L8.7 11 L12.5 7.8 Z" fill="#F2A500"/><path d="M20 3.1 L22.8 5.8 L6.3 22.6 Q5.8 23.1 5 23.3 L1.1 24.3 L1.9 20.6 Q2.1 19.9 2.6 19.4 Z" fill="#F2A500"/><path d="M21.4 1.4 L23.3 0.1 L26 2.2 L23.9 4.1 Z" fill="#F2A500"/><path d="M14.4 17.2 L17.6 14.2" stroke="#F2A500" stroke-width="2.6" stroke-linecap="round"/><path d="M16 20.8 Q15.8 16.8 19.6 16.3 Q22.7 16.2 23.5 19.4 Q24.1 21.2 26.4 21.9 Q25.4 24.4 21.5 24.4 Q16.2 24.5 16 20.8 Z" fill="#F2A500"/></svg><svg class="a" style="left:1170px;top:224px;" width="23" height="21.344696969696972" viewBox="0 0 26.4 24.5"><path d="M0.9 0.2 Q0 0 0.25 0.9 L8.7 11 L12.5 7.8 Z" fill="#F2A500"/><path d="M20 3.1 L22.8 5.8 L6.3 22.6 Q5.8 23.1 5 23.3 L1.1 24.3 L1.9 20.6 Q2.1 19.9 2.6 19.4 Z" fill="#F2A500"/><path d="M21.4 1.4 L23.3 0.1 L26 2.2 L23.9 4.1 Z" fill="#F2A500"/><path d="M14.4 17.2 L17.6 14.2" stroke="#F2A500" stroke-width="2.6" stroke-linecap="round"/><path d="M16 20.8 Q15.8 16.8 19.6 16.3 Q22.7 16.2 23.5 19.4 Q24.1 21.2 26.4 21.9 Q25.4 24.4 21.5 24.4 Q16.2 24.5 16 20.8 Z" fill="#F2A500"/></svg><svg class="a" style="left:1358px;top:222px;" width="28" height="28" viewBox="0 0 28 28"><g transform="scale(1.0000)"><rect x="0" y="0" width="28" height="28" rx="4" fill="#FFB700"/><rect x="3" y="9" width="22" height="16" rx="1.5" fill="#FFFFFF"/><path d="M5 2.2 L3 6.8 M10.5 2.2 L8.5 6.8 M16 2.2 L14 6.8 M21.5 2.2 L19.5 6.8 M26.5 2.2 L24.5 6.8" stroke="#FFFFFF" stroke-width="2"/><rect x="8.2" y="15" width="11.6" height="5" fill="none" stroke="#FFB700" stroke-width="2"/></g></svg><svg class="a" style="left:1652px;top:220px;" width="32" height="32" viewBox="0 0 32 32"><g transform="scale(1.0000)"><circle cx="16" cy="16" r="15.2" fill="#FFC400" stroke="#F7B500" stroke-width="1.4"/><rect x="8" y="8" width="16" height="16" fill="#fff"/></g></svg><svg class="a" style="left:1878.5px;top:220px;" width="31" height="31" viewBox="0 0 31 31"><g transform="scale(0.9688)"><rect x="0.7" y="0.7" width="30.6" height="30.6" fill="#9C9CA1" stroke="#8A8A90" stroke-width="1.4"/><rect x="7.5" y="7.5" width="17" height="17" fill="#fff"/></g></svg><svg class="a" style="left:1994.5px;top:220px;" width="31" height="31" viewBox="0 0 31 31"><g transform="scale(0.9688)"><rect x="0.9" y="0.9" width="30.2" height="30.2" fill="#fff" stroke="#8E8E93" stroke-width="1.8"/><text x="16" y="24.5" text-anchor="middle" font-family="Liberation Sans" font-size="23" fill="#1F6FF2">B</text></g></svg><div class="t" style="top:226.37px;font-size:22px;color:#2C2727;letter-spacing:0.6px;left:713px;">GuardDemo</div><div class="t" style="top:226.37px;font-size:22px;color:#2C2727;letter-spacing:0.6px;left:903px;">GuardDemo</div><div class="t" style="top:226.37px;font-size:22px;color:#2C2727;letter-spacing:0.6px;left:1093px;">Main</div><div class="t" style="top:226.37px;font-size:22px;color:#2C2727;letter-spacing:0.6px;left:1207px;">Main (Base)</div><div class="t" style="top:226.37px;font-size:22px;color:#2C2727;letter-spacing:0.6px;left:1396px;">View Controller Scene</div><div class="t" style="top:226.37px;font-size:22px;color:#2C2727;letter-spacing:0.6px;left:1693px;">View Controller</div><div class="t" style="top:226.37px;font-size:22px;color:#2C2727;letter-spacing:0.6px;left:1918px;">View</div><div class="t" style="top:226.37px;font-size:22px;color:#2C2727;letter-spacing:0.6px;left:2034px;">Button</div><div class="t" style="top:281.03px;font-size:23px;color:#333333;font-weight:700;letter-spacing:-0.05px;left:733px;">View Controller Scene</div><div class="t" style="top:324.53px;font-size:23px;color:#353535;letter-spacing:0.25px;left:765px;">View Controller</div><div class="t" style="top:360.53px;font-size:23px;color:#353535;letter-spacing:0.25px;left:797px;">View</div><div class="t" style="top:396.53px;font-size:23px;color:#353535;letter-spacing:0.25px;left:829px;">Safe Area</div><div class="t" style="top:469.03px;font-size:23px;color:#353535;letter-spacing:0.25px;left:765px;">First Responder</div><div class="t" style="top:504.53px;font-size:23px;color:#353535;letter-spacing:0.25px;left:765px;">Exit</div><div class="t" style="top:540.53px;font-size:23px;color:#353535;letter-spacing:0.25px;left:765px;">Storyboard Entry Point</div><div class="a" style="left:658px;top:426px;width:538px;height:36px;background:#DCDCDC;"></div><svg class="a" style="left:667px;top:287.5px;" width="15" height="10" viewBox="0 0 15 10"><path d="M1.5 1.5 L7.5 8.5 L13.5 1.5" fill="none" stroke="#7C7C7C" stroke-width="2.3" stroke-linecap="round" stroke-linejoin="round"/></svg><svg class="a" style="left:696px;top:278px;" width="28" height="28" viewBox="0 0 28 28"><g transform="scale(1.0000)"><rect x="0" y="0" width="28" height="28" rx="4" fill="#FFB700"/><rect x="3" y="9" width="22" height="16" rx="1.5" fill="#FBFBFB"/><path d="M5 2.2 L3 6.8 M10.5 2.2 L8.5 6.8 M16 2.2 L14 6.8 M21.5 2.2 L19.5 6.8 M26.5 2.2 L24.5 6.8" stroke="#FBFBFB" stroke-width="2"/><rect x="8.2" y="15" width="11.6" height="5" fill="none" stroke="#FFB700" stroke-width="2"/></g></svg><svg class="a" style="left:698.5px;top:331.5px;" width="15" height="10" viewBox="0 0 15 10"><path d="M1.5 1.5 L7.5 8.5 L13.5 1.5" fill="none" stroke="#7C7C7C" stroke-width="2.3" stroke-linecap="round" stroke-linejoin="round"/></svg><svg class="a" style="left:726px;top:320px;" width="32" height="32" viewBox="0 0 32 32"><g transform="scale(1.0000)"><circle cx="16" cy="16" r="15.2" fill="#FFC400" stroke="#F7B500" stroke-width="1.4"/><rect x="8" y="8" width="16" height="16" fill="#fff"/></g></svg><svg class="a" style="left:730.5px;top:367.5px;" width="15" height="10" viewBox="0 0 15 10"><path d="M1.5 1.5 L7.5 8.5 L13.5 1.5" fill="none" stroke="#7C7C7C" stroke-width="2.3" stroke-linecap="round" stroke-linejoin="round"/></svg><svg class="a" style="left:758px;top:356px;" width="32" height="32" viewBox="0 0 32 32"><g transform="scale(1.0000)"><rect x="0.7" y="0.7" width="30.6" height="30.6" fill="#9C9CA1" stroke="#8A8A90" stroke-width="1.4"/><rect x="7.5" y="7.5" width="17" height="17" fill="#fff"/></g></svg><svg class="a" style="left:790px;top:392px;" width="32" height="32" viewBox="0 0 32 32"><g transform="scale(1.0000)"><rect x="0.7" y="0.7" width="30.6" height="30.6" fill="#9C9CA1" stroke="#8A8A90" stroke-width="1.4"/><rect x="9" y="6.5" width="14" height="19" fill="none" stroke="#fff" stroke-width="2"/><rect x="12.5" y="10" width="7" height="12" fill="none" stroke="#fff" stroke-width="1.6"/></g></svg><svg class="a" style="left:790px;top:428px;" width="32" height="32" viewBox="0 0 32 32"><g transform="scale(1.0000)"><rect x="0.9" y="0.9" width="30.2" height="30.2" fill="#fff" stroke="#8E8E93" stroke-width="1.8"/><text x="16" y="24.5" text-anchor="middle" font-family="Liberation Sans" font-size="23" fill="#1F6FF2">B</text></g></svg><svg class="a" style="left:727.5px;top:464.5px;" width="29" height="32" viewBox="0 0 29 32"><path d="M14.3 0.5 L28.3 8 V24 L14.3 31.5 L0.3 24 V8 Z" fill="#F29B1F"/><path d="M14.3 2.8 L25.8 9 L14.3 15.2 L2.8 9 Z" fill="#F7B560"/><path d="M14.3 15.2 V30" stroke="#F7B560" stroke-width="1"/><rect x="5" y="15.5" width="4" height="7.5" fill="none" stroke="#fff" stroke-width="1.6" transform="skewY(8)"/><path d="M18.8 17.5 L20.8 16.5 V24.5" fill="none" stroke="#fff" stroke-width="2"/></svg><svg class="a" style="left:726px;top:500px;" width="32" height="32" viewBox="0 0 32 32"><rect x="0.8" y="0.8" width="30.4" height="30.4" fill="#F3A445" stroke="#F0901F" stroke-width="1.6"/><path d="M21 8.5 H7 V24.5 H21" fill="none" stroke="#fff" stroke-width="2.2"/><path d="M14 16.5 H24.5 M21 12.8 L24.8 16.5 L21 20.2" fill="none" stroke="#fff" stroke-width="2.2"/></svg><svg class="a" style="left:728.5px;top:542px;" width="27" height="22" viewBox="0 0 27 22"><path d="M1 11 H25 M15.5 1.2 L25.3 11 L15.5 20.8" fill="none" stroke="#1A1A1A" stroke-width="2.6"/></svg><svg class="a" style="left:1154px;top:282px;" width="21" height="21" viewBox="0 0 21 21"><circle cx="10.5" cy="10.5" r="10.3" fill="#FFBF00"/><path d="M5 10.5 H14.5 M10.8 6.3 L15 10.5 L10.8 14.7" fill="none" stroke="#fff" stroke-width="2.6"/></svg><div class="t" style="top:432.53px;font-size:23px;color:#353535;letter-spacing:0.25px;left:829px;">Button</div><div class="a" style="left:668px;top:1770px;width:516px;height:44px;border-radius:11px;background:#EFEFEF;box-shadow:inset 0 0 0 1px #D8D8D8;"></div><div class="t" style="top:1781.03px;font-size:23px;color:#B5B5B5;letter-spacing:0.5px;left:713px;">Filter</div><div class="a" style="left:1372px;top:275px;width:629px;height:1358px;box-sizing:border-box;border:2.1px solid #000;border-radius:74px;background:#fff;"></div><svg class="a" style="left:1500px;top:275px;" width="372" height="53" viewBox="0 0 372 53"><path d="M0 1 H3 Q12 1 12 10 Q12.5 22 18 33 Q26 50.5 48 51 H324 Q346 50.5 354 33 Q359.5 22 360 10 Q360 1 369 1 H372 V0 H0 Z" fill="#000"/></svg><div class="a" style="left:1574px;top:1612px;width:224px;height:8px;border-radius:4px;background:#000;"></div><svg class="a" style="left:1218px;top:928px;" width="152" height="54" viewBox="0 0 152 54"><defs><linearGradient id="ag" x1="0" x2="1" y1="0" y2="0"><stop offset="0" stop-color="#8a8a8a" stop-opacity="0"/><stop offset="0.55" stop-color="#8a8a8a" stop-opacity="0.9"/><stop offset="1" stop-color="#8a8a8a"/></linearGradient></defs><rect x="2" y="24.6" width="146" height="3" fill="url(#ag)"/><path d="M123 2 L148 26.2 L123 50.5" fill="none" stroke="#8a8a8a" stroke-width="3.2"/></svg><div class="a" style="left:1514px;top:925px;width:14px;height:14px;box-sizing:border-box;border:2px solid #3a3a3a;background:#fff;"></div><div class="a" style="left:1514px;top:949px;width:14px;height:14px;box-sizing:border-box;border:2px solid #3a3a3a;background:#fff;"></div><div class="a" style="left:1514px;top:970px;width:14px;height:14px;box-sizing:border-box;border:2px solid #3a3a3a;background:#fff;"></div><div class="a" style="left:1846px;top:925px;width:14px;height:14px;box-sizing:border-box;border:2px solid #3a3a3a;background:#fff;"></div><div class="a" style="left:1846px;top:949px;width:14px;height:14px;box-sizing:border-box;border:2px solid #3a3a3a;background:#fff;"></div><div class="a" style="left:1846px;top:970px;width:14px;height:14px;box-sizing:border-box;border:2px solid #3a3a3a;background:#fff;"></div><div class="a" style="left:1679px;top:925px;width:14px;height:14px;box-sizing:border-box;border:2px solid #3a3a3a;background:#fff;"></div><div class="a" style="left:1679px;top:970px;width:14px;height:14px;box-sizing:border-box;border:2px solid #3a3a3a;background:#fff;"></div><div class="a" style="left:2125px;top:1314px;width:225px;height:405px;border-radius:14px;background:#DEDEDE;box-shadow:0 0 24px 8px rgba(0,0,0,0.13);border:1.5px solid #7C7C7C;box-sizing:border-box;"></div><div class="a" style="left:2126px;top:1315px;width:223px;height:29px;border-radius:13px 13px 0 0;background:linear-gradient(#E2E2E2,#D3D3D3);border-bottom:1.5px solid #8E8E8E;"></div><div class="a" style="left:2126px;top:1708px;width:223px;height:1.5px;background:#B0B0B0;"></div><div class="a" style="left:2156px;top:1346px;width:156px;height:336px;border-radius:12px;background:#fff;box-shadow:0 0 0 0.8px #B8B8B8;"></div><svg class="a" style="left:2190px;top:1346px;" width="88" height="13" viewBox="0 0 88 13"><path d="M0 0 H88 Q87 2 87 4 Q86 12 78 12.5 H10 Q2 12 1 4 Q1 2 0 0 Z" fill="#000"/></svg><div class="t" style="top:1511.07px;font-size:7px;color:#1A7CF5;left:1734px;width:1000px;text-align:center;">Button</div><svg class="a" style="left:1215px;top:1775px;" width="28" height="28" viewBox="0 0 28 28"><rect x="1.3" y="1.3" width="25" height="25" rx="4" fill="none" stroke="#707070" stroke-width="2.2"/><rect x="5" y="5" width="5" height="18" fill="#707070"/></svg><svg class="a" style="left:1261px;top:1774px;" width="30" height="30" viewBox="0 0 30 30"><circle cx="15" cy="15" r="13.5" fill="none" stroke="#707070" stroke-width="2.2"/><circle cx="15" cy="8" r="2.2" fill="#707070"/><path d="M7.5 11.5 H22.5 M15 11.5 V17 L11.5 24 M15 17 L18.5 24" fill="none" stroke="#707070" stroke-width="2.2"/></svg><svg class="a" style="left:1313px;top:1774px;" width="30" height="30" viewBox="0 0 30 30"><circle cx="15" cy="15" r="13.2" fill="none" stroke="#707070" stroke-width="2.5"/><path d="M15 1.8 A13.2 13.2 0 0 0 15 28.2 Z" fill="#707070"/><path d="M15 9.8 A5.2 5.2 0 0 0 15 20.2 Z" fill="#FAFAFA"/><path d="M15 9.8 A5.2 5.2 0 0 1 15 20.2 Z" fill="#707070"/></svg><svg class="a" style="left:1365px;top:1772px;" width="32" height="32" viewBox="0 0 32 32"><rect x="2" y="13" width="18" height="17" rx="1.5" fill="none" stroke="#707070" stroke-width="2.2"/><path d="M18 5 Q27 5 27 13 M24 1.5 L18 5 L22.5 9" fill="none" stroke="#707070" stroke-width="2"/></svg><svg class="a" style="left:1420px;top:1775px;" width="27" height="28" viewBox="0 0 27 28"><rect x="1.2" y="1.2" width="24.5" height="25.5" rx="2.5" fill="none" stroke="#C9C9C9" stroke-width="2"/><path d="M13.5 1 V27" stroke="#C9C9C9" stroke-width="2"/></svg><svg class="a" style="left:1477px;top:1775px;" width="20" height="30" viewBox="0 0 20 30"><rect x="1.3" y="1.3" width="17" height="26.5" rx="3" fill="none" stroke="#707070" stroke-width="2.5"/><path d="M5.5 2.5 H13.5" stroke="#707070" stroke-width="2.5"/><path d="M6 23.5 H13" stroke="#707070" stroke-width="1.6"/></svg><svg class="a" style="left:1711px;top:1773px;" width="30" height="30" viewBox="0 0 30 30"><circle cx="11.5" cy="11.5" r="9.7" fill="none" stroke="#707070" stroke-width="2.2"/><path d="M18.5 18.5 L27 27" stroke="#707070" stroke-width="2.6" stroke-linecap="round"/><path d="M6.5 11.5 H16.5" stroke="#707070" stroke-width="2.2"/></svg><svg class="a" style="left:1845px;top:1773px;" width="30" height="30" viewBox="0 0 30 30"><circle cx="11.5" cy="11.5" r="9.7" fill="none" stroke="#707070" stroke-width="2.2"/><path d="M18.5 18.5 L27 27" stroke="#707070" stroke-width="2.6" stroke-linecap="round"/><path d="M6.5 11.5 H16.5" stroke="#707070" stroke-width="2.2"/><path d="M11.5 6.5 V16.5" stroke="#707070" stroke-width="2.2"/></svg><svg class="a" style="left:2125px;top:1773px;" width="32" height="32" viewBox="0 0 32 32"><path d="M1.2 8 V1.2 H8 M24 1.2 H30.8 V8 M30.8 24 V30.8 H24 M8 30.8 H1.2 V24" fill="none" stroke="#707070" stroke-width="2"/><path d="M7.6 15.2 A8.6 8.6 0 1 1 13 22" fill="none" stroke="#707070" stroke-width="2"/><path d="M15.5 16.3 L10.2 21.3 L15.5 26.2" fill="none" stroke="#707070" stroke-width="2"/></svg><svg class="a" style="left:2177px;top:1772px;" width="32" height="32" viewBox="0 0 32 32"><path d="M2 1 V31" stroke="#707070" stroke-width="2.4"/><rect x="7" y="6" width="16" height="8" fill="none" stroke="#707070" stroke-width="2.2"/><rect x="7" y="18" width="23" height="8" fill="none" stroke="#707070" stroke-width="2.2"/></svg><svg class="a" style="left:2229px;top:1772px;" width="32" height="32" viewBox="0 0 32 32"><rect x="9" y="9" width="14" height="14" fill="none" stroke="#707070" stroke-width="2.2"/><path d="M16 1 V9 M12 1.5 H20 M16 23 V31 M12 30.5 H20 M1.5 16 H9 M1.5 12 V20 M23 16 H30.5 M30.5 12 V20" fill="none" stroke="#707070" stroke-width="2"/></svg><svg class="a" style="left:2281px;top:1772px;" width="32" height="32" viewBox="0 0 32 32"><path d="M1.5 12 V20 M1.5 16 H6.5 M30.5 12 V20 M30.5 16 H25.5" stroke="#707070" stroke-width="2"/><path d="M16 6.5 L25 24.5 H7 Z" fill="none" stroke="#707070" stroke-width="2.2" stroke-linejoin="round"/><circle cx="16" cy="17.5" r="2.5" fill="#707070"/></svg><svg class="a" style="left:2337px;top:1772px;" width="32" height="32" viewBox="0 0 32 32"><path d="M9 5.5 H1.5 V31 H30.5 V5.5 H23" fill="none" stroke="#707070" stroke-width="2.2"/><path d="M16 1 V20 M10 14 L16 20 L22 14" fill="none" stroke="#707070" stroke-width="2.2"/></svg><svg class="a" style="left:680px;top:1838px;" width="32" height="20" viewBox="0 0 32 20"><path d="M3 0.5 H24 Q26 0.5 27 2 L31.3 8.5 Q32 9.8 31.3 11 L27 17.5 Q26 19 24 19 H3 Q0.5 19 0.5 16.5 V3 Q0.5 0.5 3 0.5 Z" fill="#0A7CFF"/></svg><svg class="a" style="left:2338px;top:1835px;" width="28" height="27" viewBox="0 0 28 27"><rect x="1.2" y="1.2" width="25" height="24.5" rx="5" fill="none" stroke="#707070" stroke-width="2"/><rect x="4.5" y="16" width="18.5" height="6" rx="1" fill="#707070"/></svg><svg class="a" style="left:677px;top:1778px;" width="28" height="28" viewBox="0 0 28 28"><circle cx="14" cy="14" r="12.3" fill="none" stroke="#1E1E1E" stroke-width="2"/><path d="M7.5 10 H20.5 M9.5 14.5 H18.5 M11.5 19 H16.5" stroke="#1E1E1E" stroke-width="2"/></svg><div class="t" style="top:944.87px;font-size:22px;color:#1F86F2;letter-spacing:0.6px;left:1188px;width:1000px;text-align:center;">Button</div><div class="t" style="top:1779.37px;font-size:22px;color:#7A7A7A;left:1525px;">iPhone 11</div><div class="t" style="top:1779.37px;font-size:22px;color:#7A7A7A;letter-spacing:0.3px;left:1771px;">76%</div><svg class="a" style="left:2462px;top:167px;" width="23" height="28" viewBox="0 0 23 28"><path d="M2 3.3 Q2 1.5 3.8 1.5 H12.5 L21 10 V24.5 Q21 26.3 19.2 26.3 H3.8 Q2 26.3 2 24.5 Z M12.5 1.5 V8.2 Q12.5 10 14.3 10 H21" fill="none" stroke="#787676" stroke-width="2" stroke-linejoin="round"/></svg><svg class="a" style="left:2518px;top:167px;" width="28" height="28" viewBox="0 0 28 28"><circle cx="14" cy="13.6" r="12.5" fill="none" stroke="#787676" stroke-width="2"/><path d="M14 6.5 V14 H8" fill="none" stroke="#787676" stroke-width="2"/></svg><svg class="a" style="left:2578px;top:167px;" width="28" height="28" viewBox="0 0 28 28"><circle cx="14" cy="13.6" r="12.5" fill="none" stroke="#787676" stroke-width="2"/><path d="M10 10.5 Q10 6.2 14 6.2 Q18 6.2 18 10 Q18 12.5 15.5 13.8 Q14 14.6 14 17" fill="none" stroke="#787676" stroke-width="2.1" stroke-linecap="round"/><circle cx="14" cy="21" r="1.4" fill="#787676"/></svg><svg class="a" style="left:2639px;top:170px;" width="26" height="22" viewBox="0 0 26 22"><rect x="0" y="0" width="26" height="22" rx="3.5" fill="#0A7AFF"/><rect x="4" y="4" width="10" height="9.5" fill="#fff"/><path d="M16.5 5 H22 M16.5 9 H22 M16.5 13 H22 M4 17.5 H22" stroke="#fff" stroke-width="2"/></svg><svg class="a" style="left:2698px;top:167px;" width="28" height="28" viewBox="0 0 28 28"><path d="M1 3.8 H27 M1 13.8 H27 M1 23.8 H27" stroke="#787676" stroke-width="2"/><circle cx="19.3" cy="3.8" r="3" fill="#F3EEEE" stroke="#787676" stroke-width="2"/><circle cx="5" cy="13.8" r="3" fill="#F3EEEE" stroke="#787676" stroke-width="2"/><circle cx="19.3" cy="23.8" r="3" fill="#F3EEEE" stroke="#787676" stroke-width="2"/></svg><svg class="a" style="left:2758px;top:168px;" width="27" height="27" viewBox="0 0 27 27"><path d="M2 1.8 V25 H25.2 Z" fill="none" stroke="#787676" stroke-width="2.2" stroke-linejoin="miter"/><path d="M6.5 12 V20.5 H15 Z" fill="none" stroke="#787676" stroke-width="2"/></svg><svg class="a" style="left:2818px;top:167px;" width="28" height="28" viewBox="0 0 28 28"><path d="M20.5 4.5 A11.5 11.5 0 1 0 20.5 22.7" fill="none" stroke="#787676" stroke-width="2"/><circle cx="13.5" cy="13.6" r="5" fill="#787676"/><path d="M13.5 13.6 H27" stroke="#787676" stroke-width="2"/></svg><div class="t" style="top:221.68px;font-size:24px;color:#7A7575;font-weight:700;letter-spacing:0.5px;left:2407px;">Custom Class</div><div class="t" style="top:278.22px;font-size:21px;color:#262222;letter-spacing:0.2px;right:473px;">Class</div><div class="t" style="top:322.72px;font-size:21px;color:#262222;letter-spacing:0.2px;right:473px;">Module</div><div class="a" style="left:2562px;top:269px;width:335px;height:32px;background:#fff;border-radius:7px;box-shadow:0 0.5px 1.5px rgba(0,0,0,0.28), 0 0 0 0.6px rgba(0,0,0,0.08);"></div><div class="t" style="top:276.17px;font-size:22px;color:#262222;letter-spacing:0.6px;left:2569px;">GoRegisterButton</div><svg class="a" style="left:2838px;top:275px;" width="20" height="20" viewBox="0 0 20 20"><circle cx="10" cy="10" r="9.8" fill="#7D7D7D"/><path d="M5 10 H14.5 M10.6 6 L14.6 10 L10.6 14" fill="none" stroke="#fff" stroke-width="2.1"/></svg><svg class="a" style="left:2870px;top:273px;" width="24" height="24" viewBox="0 0 24 24"><defs><linearGradient id="bd" x1="0" x2="0" y1="0" y2="1"><stop offset="0" stop-color="#3A93FF"/><stop offset="1" stop-color="#0A6EF5"/></linearGradient></defs><rect x="0" y="0" width="24" height="24" rx="5" fill="url(#bd)"/><path d="M7.5 10 L12 14.3 L16.5 10" fill="none" stroke="#fff" stroke-width="2.4"/></svg><div class="a" style="left:2557px;top:307px;width:347px;height:44px;border-radius:12px;background:#82A9EF;"></div><div class="a" style="left:2563px;top:314px;width:334px;height:30px;border-radius:6px;background:#fff;"></div><div class="t" style="top:320.17px;font-size:22px;color:#111;letter-spacing:0.6px;left:2569px;">Guard</div><div class="a" style="left:2630px;top:317px;width:2px;height:27px;background:#111;"></div><svg class="a" style="left:2870px;top:317px;" width="24" height="24" viewBox="0 0 24 24"><defs><linearGradient id="bd" x1="0" x2="0" y1="0" y2="1"><stop offset="0" stop-color="#3A93FF"/><stop offset="1" stop-color="#0A6EF5"/></linearGradient></defs><rect x="0" y="0" width="24" height="24" rx="5" fill="url(#bd)"/><path d="M7.5 10 L12 14.3 L16.5 10" fill="none" stroke="#fff" stroke-width="2.4"/></svg><div class="a" style="left:2479px;top:260px;width:432px;height:96px;box-sizing:border-box;border:4px solid #FF2A12;"></div><div class="a" style="left:2560px;top:360px;width:24px;height:24px;border-radius:5px;background:#fff;box-shadow:0 0.5px 1.2px rgba(0,0,0,0.25), 0 0 0 0.6px rgba(0,0,0,0.12);"></div><div class="t" style="top:362.07px;font-size:22px;color:#262222;letter-spacing:0.65px;left:2593px;">Inherit Module From Target</div><div class="a" style="left:2408px;top:414px;width:488px;height:2px;background:#DCD7D7;"></div><div class="t" style="top:430.88px;font-size:24px;color:#7A7575;font-weight:700;letter-spacing:0.5px;left:2407px;">Identity</div><div class="t" style="top:486.72px;font-size:21px;color:#262222;letter-spacing:0.2px;right:473px;">Restoration ID</div><div class="a" style="left:2562px;top:480px;width:334px;height:32px;background:#fff;border-radius:0px;box-shadow:0 1px 0 rgba(0,0,0,0.16), 0 0 0 1px rgba(0,0,0,0.07);"></div><div class="a" style="left:2408px;top:538px;width:488px;height:2px;background:#DCD7D7;"></div><div class="t" style="top:554.38px;font-size:24px;color:#7A7575;font-weight:700;letter-spacing:0.72px;left:2407px;">User Defined Runtime Attributes</div><div class="a" style="left:2408px;top:592px;width:488px;height:194px;box-sizing:border-box;border:2px solid #C8C6C6;background:#fff;"></div><div class="a" style="left:2410px;top:648px;width:484px;height:2px;background:#E3E3E3;"></div><div class="a" style="left:2673px;top:606px;width:2px;height:32px;background:#E6E6E6;"></div><div class="a" style="left:2809px;top:606px;width:2px;height:32px;background:#E6E6E6;"></div><div class="t" style="top:612.17px;font-size:22px;color:#262222;letter-spacing:0.65px;left:2426.5px;">Key Path</div><div class="t" style="top:612.17px;font-size:22px;color:#262222;letter-spacing:0.65px;left:2682px;">Type</div><div class="t" style="top:612.17px;font-size:22px;color:#262222;letter-spacing:0.65px;left:2818px;">Val...</div><svg class="a" style="left:2420px;top:757px;" width="21" height="21" viewBox="0 0 21 21"><path d="M10.5 0.5 V20.5 M0.5 10.5 H20.5" stroke="#3E3E3E" stroke-width="2"/></svg><svg class="a" style="left:2460px;top:757px;" width="21" height="21" viewBox="0 0 21 21"><path d="M0.5 10.5 H20.5" stroke="#B3B3B3" stroke-width="2"/></svg><div class="a" style="left:2408px;top:802px;width:488px;height:2px;background:#DCD7D7;"></div><div class="t" style="top:818.68px;font-size:24px;color:#7A7575;font-weight:700;letter-spacing:0.5px;left:2407px;">Document</div><div class="t" style="top:873.82px;font-size:21px;color:#262222;letter-spacing:0.2px;right:473px;">Label</div><div class="a" style="left:2562px;top:868px;width:334px;height:33px;background:#fff;border-radius:0px;box-shadow:0 1px 0 rgba(0,0,0,0.16), 0 0 0 1px rgba(0,0,0,0.07);"></div><div class="t" style="top:872.97px;font-size:22px;color:#BDBABA;letter-spacing:0.65px;left:2569px;">Xcode Specific Label</div><svg class="a" style="left:2565px;top:917px;" width="18" height="18" viewBox="0 0 18 18"><path d="M2.5 2.5 L15.5 15.5 M15.5 2.5 L2.5 15.5" stroke="#3A3A3A" stroke-width="3"/></svg><div class="a" style="left:2598px;top:918px;width:16px;height:16px;border-radius:2px;background:#F28B80;box-shadow:0 1px 1.5px rgba(0,0,0,0.22);"></div><div class="a" style="left:2634px;top:918px;width:16px;height:16px;border-radius:2px;background:#F6BE78;box-shadow:0 1px 1.5px rgba(0,0,0,0.22);"></div><div class="a" style="left:2670px;top:918px;width:16px;height:16px;border-radius:2px;background:#F4E27F;box-shadow:0 1px 1.5px rgba(0,0,0,0.22);"></div><div class="a" style="left:2706px;top:918px;width:16px;height:16px;border-radius:2px;background:#BBDC7F;box-shadow:0 1px 1.5px rgba(0,0,0,0.22);"></div><div class="a" style="left:2742px;top:918px;width:16px;height:16px;border-radius:2px;background:#8DC5F7;box-shadow:0 1px 1.5px rgba(0,0,0,0.22);"></div><div class="a" style="left:2778px;top:918px;width:16px;height:16px;border-radius:2px;background:#D3AEEA;box-shadow:0 1px 1.5px rgba(0,0,0,0.22);"></div><div class="a" style="left:2814px;top:918px;width:16px;height:16px;border-radius:2px;background:#D2D2D2;box-shadow:0 1px 1.5px rgba(0,0,0,0.22);"></div><div class="t" style="top:959.22px;font-size:21px;color:#262222;letter-spacing:0.2px;right:473px;">Object ID</div><div class="t" style="top:958.37px;font-size:22px;color:#262222;letter-spacing:0.65px;left:2565px;">QLX-ND-Byb</div><div class="t" style="top:998.82px;font-size:21px;color:#262222;letter-spacing:0.2px;right:473px;">Lock</div><div class="a" style="left:2562px;top:992px;width:336px;height:33px;background:#fff;border-radius:7px;box-shadow:0 0.5px 1.5px rgba(0,0,0,0.28), 0 0 0 0.6px rgba(0,0,0,0.08);"></div><div class="t" style="top:997.97px;font-size:22px;color:#262222;letter-spacing:0.65px;left:2575px;">Inherited - (Nothing)</div><svg class="a" style="left:2870px;top:996px;" width="24" height="24" viewBox="0 0 24 24"><defs><linearGradient id="bd" x1="0" x2="0" y1="0" y2="1"><stop offset="0" stop-color="#3A93FF"/><stop offset="1" stop-color="#0A6EF5"/></linearGradient></defs><rect x="0" y="0" width="24" height="24" rx="5" fill="url(#bd)"/><path d="M7.5 9 L12 4.8 L16.5 9 M7.5 15 L12 19.2 L16.5 15" fill="none" stroke="#fff" stroke-width="2.2"/></svg><div class="t" style="top:1044.72px;font-size:21px;color:#262222;letter-spacing:0.2px;right:473px;">Localizer Hint</div><div class="a" style="left:2562px;top:1038px;width:334px;height:33px;background:#fff;border-radius:0px;box-shadow:0 1px 0 rgba(0,0,0,0.16), 0 0 0 1px rgba(0,0,0,0.07);"></div><div class="t" style="top:1043.87px;font-size:22px;color:#BDBABA;letter-spacing:0.65px;left:2569px;">Comment For Localizer</div><div class="a" style="left:2408px;top:1096px;width:488px;height:2px;background:#DCD7D7;"></div><div class="t" style="top:1112.28px;font-size:24px;color:#7A7575;font-weight:700;letter-spacing:0.5px;left:2407px;">Accessibility</div><div class="t" style="top:1163.22px;font-size:21px;color:#262222;letter-spacing:0.2px;right:473px;">Accessibility</div><svg class="a" style="left:2562px;top:1160px;" width="24" height="24" viewBox="0 0 24 24"><defs><linearGradient id="cb" x1="0" x2="0" y1="0" y2="1"><stop offset="0" stop-color="#3A93FF"/><stop offset="1" stop-color="#0A6EF5"/></linearGradient></defs><rect x="0" y="0" width="24" height="24" rx="5" fill="url(#cb)"/><path d="M5.8 12.3 L10.2 17 L18.3 6.5" fill="none" stroke="#fff" stroke-width="3" stroke-linecap="round" stroke-linejoin="round"/></svg><div class="t" style="top:1162.37px;font-size:22px;color:#262222;letter-spacing:0.65px;left:2595px;">Enabled</div><div class="t" style="top:1204.92px;font-size:21px;color:#262222;letter-spacing:0.2px;right:473px;">Label</div><div class="a" style="left:2562px;top:1198px;width:334px;height:33px;background:#fff;border-radius:0px;box-shadow:0 1px 0 rgba(0,0,0,0.16), 0 0 0 1px rgba(0,0,0,0.07);"></div><div class="t" style="top:1204.07px;font-size:22px;color:#BDBABA;letter-spacing:0.65px;left:2569px;">Label</div><div class="t" style="top:1250.92px;font-size:21px;color:#262222;letter-spacing:0.2px;right:473px;">Hint</div><div class="a" style="left:2562px;top:1244px;width:334px;height:33px;background:#fff;border-radius:0px;box-shadow:0 1px 0 rgba(0,0,0,0.16), 0 0 0 1px rgba(0,0,0,0.07);"></div><div class="t" style="top:1250.07px;font-size:22px;color:#BDBABA;letter-spacing:0.65px;left:2569px;">Hint</div><div class="t" style="top:1296.52px;font-size:21px;color:#262222;letter-spacing:0.2px;right:473px;">Identifier</div><div class="a" style="left:2562px;top:1290px;width:334px;height:33px;background:#fff;border-radius:0px;box-shadow:0 1px 0 rgba(0,0,0,0.16), 0 0 0 1px rgba(0,0,0,0.07);"></div><div class="t" style="top:1295.67px;font-size:22px;color:#BDBABA;letter-spacing:0.65px;left:2569px;">Identifier</div><div class="a" style="left:2408px;top:1332px;width:488px;height:2px;background:#DCD7D7;"></div><div class="t" style="top:1347.42px;font-size:21px;color:#262222;letter-spacing:0.2px;right:473px;">Traits</div><svg class="a" style="left:2562px;top:1344px;" width="24" height="24" viewBox="0 0 24 24"><defs><linearGradient id="cb" x1="0" x2="0" y1="0" y2="1"><stop offset="0" stop-color="#3A93FF"/><stop offset="1" stop-color="#0A6EF5"/></linearGradient></defs><rect x="0" y="0" width="24" height="24" rx="5" fill="url(#cb)"/><path d="M5.8 12.3 L10.2 17 L18.3 6.5" fill="none" stroke="#fff" stroke-width="3" stroke-linecap="round" stroke-linejoin="round"/></svg><div class="t" style="top:1345.37px;font-size:22px;color:#262222;letter-spacing:0.65px;left:2595px;">Button</div><div class="a" style="left:2562px;top:1380px;width:24px;height:24px;border-radius:5px;background:#fff;box-shadow:0 0.5px 1.2px rgba(0,0,0,0.25), 0 0 0 0.6px rgba(0,0,0,0.12);"></div><div class="t" style="top:1381.37px;font-size:22px;color:#262222;letter-spacing:0.65px;left:2595px;">Image</div><div class="a" style="left:2562px;top:1416px;width:24px;height:24px;border-radius:5px;background:#fff;box-shadow:0 0.5px 1.2px rgba(0,0,0,0.25), 0 0 0 0.6px rgba(0,0,0,0.12);"></div><div class="t" style="top:1417.37px;font-size:22px;color:#262222;letter-spacing:0.65px;left:2595px;">Static Text</div><div class="a" style="left:2562px;top:1452px;width:24px;height:24px;border-radius:5px;background:#fff;box-shadow:0 0.5px 1.2px rgba(0,0,0,0.25), 0 0 0 0.6px rgba(0,0,0,0.12);"></div><div class="t" style="top:1453.37px;font-size:22px;color:#262222;letter-spacing:0.65px;left:2595px;">Search Field</div><div class="a" style="left:2562px;top:1488px;width:24px;height:24px;border-radius:5px;background:#fff;box-shadow:0 0.5px 1.2px rgba(0,0,0,0.25), 0 0 0 0.6px rgba(0,0,0,0.12);"></div><div class="t" style="top:1489.37px;font-size:22px;color:#262222;letter-spacing:0.65px;left:2595px;">Plays Sound</div><div class="a" style="left:2562px;top:1524px;width:24px;height:24px;border-radius:5px;background:#fff;box-shadow:0 0.5px 1.2px rgba(0,0,0,0.25), 0 0 0 0.6px rgba(0,0,0,0.12);"></div><div class="t" style="top:1525.37px;font-size:22px;color:#262222;letter-spacing:0.65px;left:2595px;">Keyboard Key</div><div class="a" style="left:2562px;top:1560px;width:24px;height:24px;border-radius:5px;background:#fff;box-shadow:0 0.5px 1.2px rgba(0,0,0,0.25), 0 0 0 0.6px rgba(0,0,0,0.12);"></div><div class="t" style="top:1561.37px;font-size:22px;color:#262222;letter-spacing:0.65px;left:2595px;">Summary Element</div><svg class="a" style="left:2562px;top:1596px;" width="24" height="24" viewBox="0 0 24 24"><defs><linearGradient id="cb" x1="0" x2="0" y1="0" y2="1"><stop offset="0" stop-color="#3A93FF"/><stop offset="1" stop-color="#0A6EF5"/></linearGradient></defs><rect x="0" y="0" width="24" height="24" rx="5" fill="url(#cb)"/><path d="M5.8 12.3 L10.2 17 L18.3 6.5" fill="none" stroke="#fff" stroke-width="3" stroke-linecap="round" stroke-linejoin="round"/></svg><div class="t" style="top:1597.37px;font-size:22px;color:#262222;letter-spacing:0.65px;left:2595px;">User Interaction Enabled</div><div class="a" style="left:2562px;top:1632px;width:24px;height:24px;border-radius:5px;background:#fff;box-shadow:0 0.5px 1.2px rgba(0,0,0,0.25), 0 0 0 0.6px rgba(0,0,0,0.12);"></div><div class="t" style="top:1633.37px;font-size:22px;color:#262222;letter-spacing:0.65px;left:2595px;">Updates Frequently</div><div class="a" style="left:2562px;top:1668px;width:24px;height:24px;border-radius:5px;background:#fff;box-shadow:0 0.5px 1.2px rgba(0,0,0,0.25), 0 0 0 0.6px rgba(0,0,0,0.12);"></div><div class="t" style="top:1669.37px;font-size:22px;color:#262222;letter-spacing:0.65px;left:2595px;">Starts Media Session</div><div class="a" style="left:2562px;top:1704px;width:24px;height:24px;border-radius:5px;background:#fff;box-shadow:0 0.5px 1.2px rgba(0,0,0,0.25), 0 0 0 0.6px rgba(0,0,0,0.12);"></div><div class="t" style="top:1705.37px;font-size:22px;color:#262222;letter-spacing:0.65px;left:2595px;">Adjustable</div><div class="a" style="left:2562px;top:1740px;width:24px;height:24px;border-radius:5px;background:#fff;box-shadow:0 0.5px 1.2px rgba(0,0,0,0.25), 0 0 0 0.6px rgba(0,0,0,0.12);"></div><div class="t" style="top:1741.37px;font-size:22px;color:#262222;letter-spacing:0.65px;left:2595px;">Allows Direct Interaction</div><div class="a" style="left:2562px;top:1776px;width:24px;height:24px;border-radius:5px;background:#fff;box-shadow:0 0.5px 1.2px rgba(0,0,0,0.25), 0 0 0 0.6px rgba(0,0,0,0.12);"></div><div class="t" style="top:1777.37px;font-size:22px;color:#262222;letter-spacing:0.65px;left:2595px;">Causes Page Turn</div><div class="a" style="left:2562px;top:1812px;width:24px;height:24px;border-radius:5px;background:#fff;box-shadow:0 0.5px 1.2px rgba(0,0,0,0.25), 0 0 0 0.6px rgba(0,0,0,0.12);"></div><div class="t" style="top:1813.37px;font-size:22px;color:#262222;letter-spacing:0.65px;left:2595px;">Header</div><div class="a" style="left:2738px;top:1344px;width:24px;height:24px;border-radius:5px;background:#fff;box-shadow:0 0.5px 1.2px rgba(0,0,0,0.25), 0 0 0 0.6px rgba(0,0,0,0.12);"></div><div class="t" style="top:1345.37px;font-size:22px;color:#262222;letter-spacing:0.65px;left:2770.5px;">Link</div><div class="a" style="left:2738px;top:1380px;width:24px;height:24px;border-radius:5px;background:#fff;box-shadow:0 0.5px 1.2px rgba(0,0,0,0.25), 0 0 0 0.6px rgba(0,0,0,0.12);"></div><div class="t" style="top:1381.37px;font-size:22px;color:#262222;letter-spacing:0.65px;left:2770.5px;">Selected</div><div class="a" style="left:2408px;top:1862px;width:488px;height:2px;background:#DCD7D7;"></div></div></body></html>
